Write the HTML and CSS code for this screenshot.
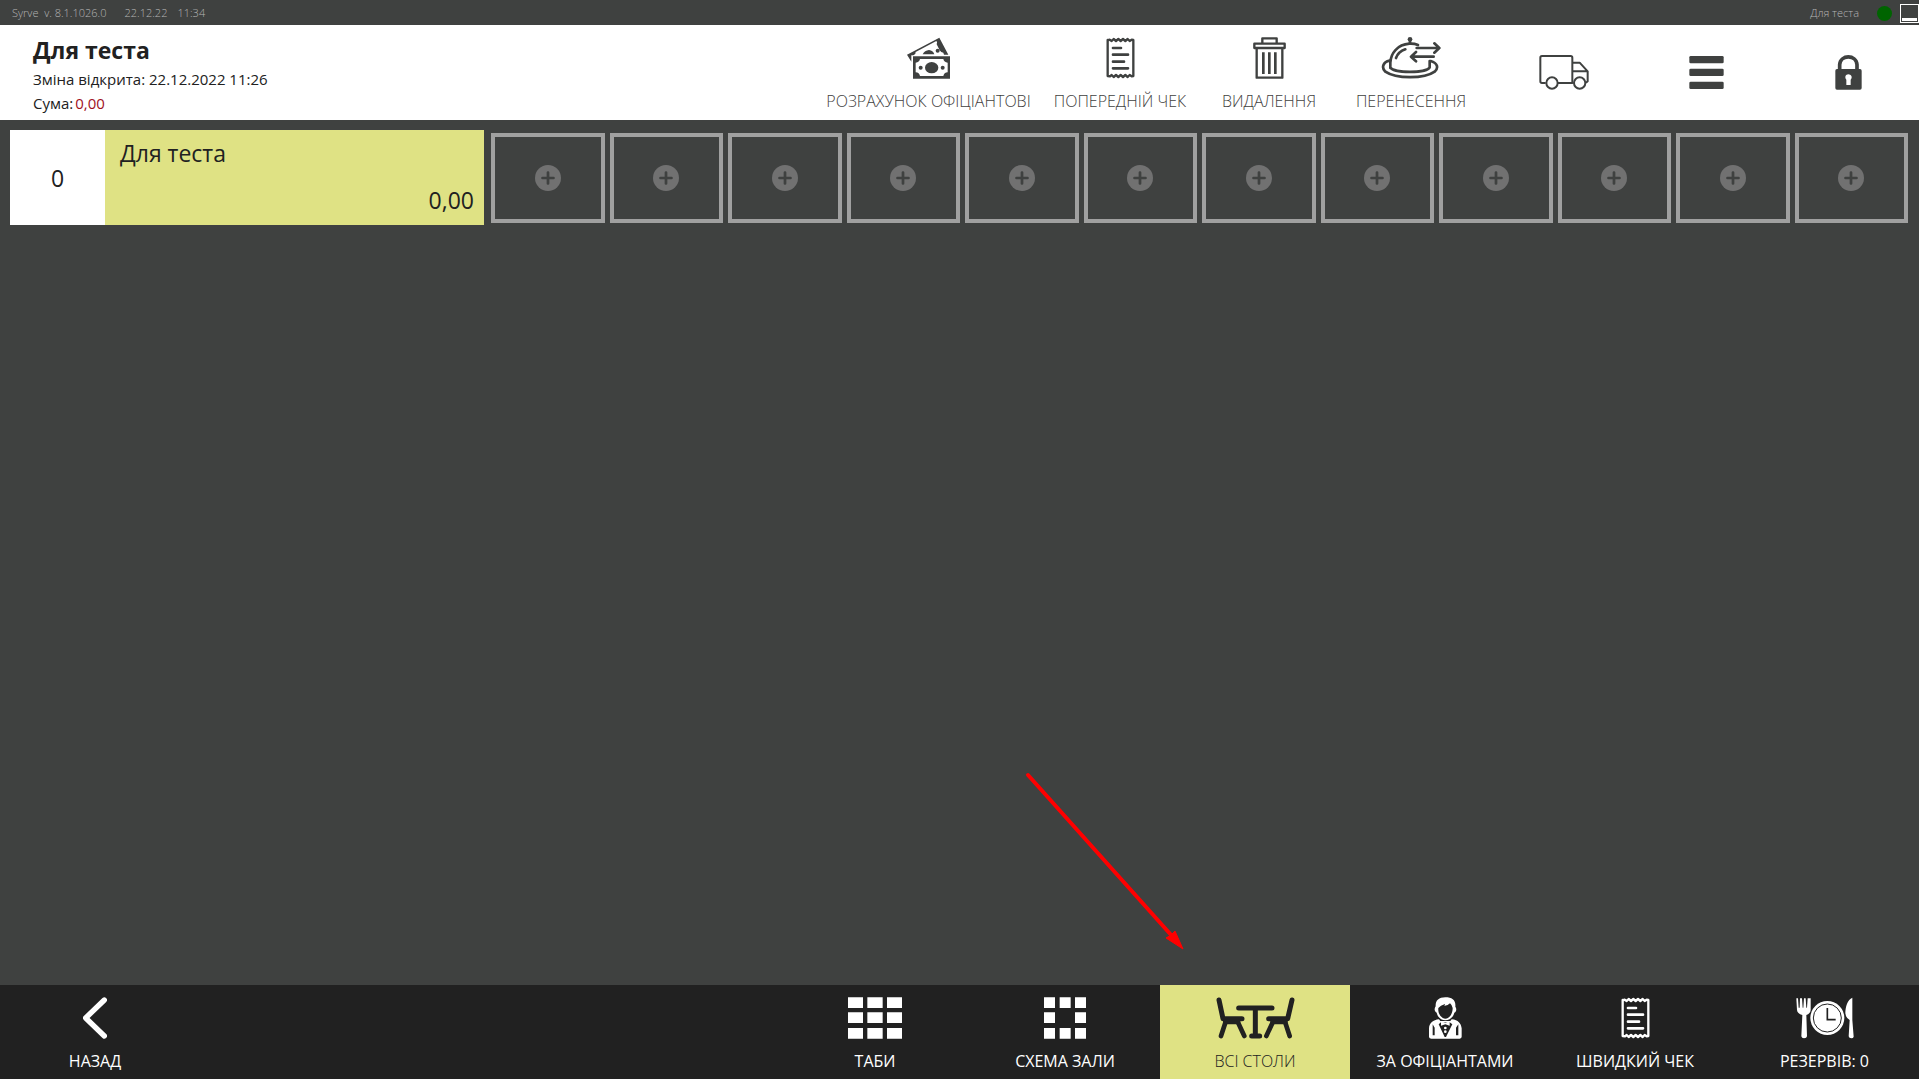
FILE: index.html
```html
<!DOCTYPE html>
<html lang="uk">
<head>
<meta charset="utf-8">
<meta name="viewport" content="width=device-width, initial-scale=1">
<title>Syrve</title>
<link rel="stylesheet" href="styles.css">
</head>
<body>
<svg class="defs" aria-hidden="true">
  <symbol id="receipt" viewBox="915 51 87 126">
    <path d="M920 60V168l7 1 5-4 6 6 7-6 7 6 7-6 7 6 7-6 7 6 6-6 6 4 5-1V60l-5-1-6 4-6-6-7 6-7-6-7 6-7-6-7 6-7-6-6 6-6-4-6 2Z" fill="none" stroke="currentColor" stroke-width="7" stroke-linejoin="round"/>
    <path d="M936 84h24M936 104h45M936 125h33M936 145h45" fill="none" stroke="currentColor" stroke-width="8" stroke-linecap="round"/>
  </symbol>
  <symbol id="plus" viewBox="0 0 76 76">
    <circle cx="38" cy="38" r="38" fill="#717171"/>
    <path d="M38 22v32M22 38h32" stroke="#3f4140" stroke-width="8" stroke-linecap="round"/>
  </symbol>
</svg>

<div class="status">
  <span class="status-version">Syrve&nbsp; v. 8.1.1026.0</span>
  <span class="status-date">22.12.22</span>
  <span>11:34</span>
  <span class="status-user">Для теста</span>
  <span class="status-dot"></span>
  <button class="minimize" aria-label="Згорнути"></button>
</div>

<header class="header">
  <div class="shift">
    <h1>Для теста</h1>
    <p>Зміна відкрита: 22.12.2022 11:26</p>
    <p class="total">Сума:<span>0,00</span></p>
  </div>
  <nav class="actions">
    <button class="tile tile-wide">
      <svg class="icon" width="43" height="42" viewBox="321 51 129 126">
        <path fill="currentColor" fill-rule="evenodd" d="M321 104 418 53 445 104H432L430 98Q423 98 419 91L410 73Q413 66 409 63L347 96Q348 103 340 106H334V125Z"/>
        <path fill="currentColor" d="M368 103Q374 91 387 90 399 91 403 103Z"/>
        <circle cx="413" cy="92" r="6" fill="currentColor"/>
        <path fill="currentColor" fill-rule="evenodd" d="M339 109H450V176H339ZM360 117Q358 127 347 128V157Q358 158 360 168H430Q432 158 443 157V128Q432 127 430 117Z"/>
        <ellipse cx="395" cy="143" rx="20" ry="17" fill="currentColor"/>
        <circle cx="362" cy="143" r="6" fill="currentColor"/><circle cx="428" cy="143" r="6" fill="currentColor"/>
      </svg>
      <span>РОЗРАХУНОК ОФІЦІАНТОВІ</span>
    </button>
    <button class="tile tile-mid">
      <svg class="icon" width="29" height="42"><use href="#receipt"/></svg>
      <span>ПОПЕРЕДНІЙ ЧЕК</span>
    </button>
    <button class="tile">
      <svg class="icon" width="33" height="42" viewBox="157 51 99 126">
        <g fill="none" stroke="currentColor" stroke-width="7" stroke-linejoin="round">
          <path d="M185 70V55H228V70M161 71H252V84H161ZM168 85V173H245V85"/>
          <path d="M188 97V162M206 97V162M224 97V162" stroke-width="8"/>
        </g>
      </svg>
      <span>ВИДАЛЕННЯ</span>
    </button>
    <button class="tile">
      <svg class="icon" width="60" height="42" viewBox="543 51 180 126">
        <g fill="none" stroke="currentColor" stroke-width="8" stroke-linecap="round" stroke-linejoin="round">
          <path d="M571 144V128C572 100 592 74 628 71Q642 70 654 75M571 142C580 160 680 160 689 142V123"/>
          <path d="M569 122C548 126 544 144 556 155 588 177 673 177 704 155 717 143 712 129 692 123"/>
          <path d="M588 114Q595 95 616 88"/>
          <path d="M630 60v11"/>
          <path d="M650 84H714M703 70 718 84 703 98M701 110H634M648 96 633 110 648 124"/>
        </g>
        <circle cx="630" cy="58" r="7" fill="currentColor"/>
      </svg>
      <span>ПЕРЕНЕСЕННЯ</span>
    </button>
    <button class="tile tile-icon tile-first" aria-label="Доставка">
      <svg width="50" height="35" viewBox="1016 105 150 105">
        <g fill="none" stroke="currentColor" stroke-width="6" stroke-linejoin="round">
          <path d="M1036 189H1025Q1020 189 1020 184V113Q1020 108 1025 108H1111Q1116 108 1116 113V189H1073M1116 128H1138L1162 154V184L1157 188M1116 154H1162M1116 188H1120"/>
          <circle cx="1055" cy="189" r="17"/><circle cx="1138" cy="189" r="17"/>
        </g>
      </svg>
    </button>
    <button class="tile tile-icon" aria-label="Меню">
      <svg width="35" height="33" viewBox="266 168 105 99" fill="currentColor">
        <rect x="267" y="168" width="103" height="22" rx="4"/><rect x="267" y="206" width="103" height="22" rx="4"/><rect x="267" y="245" width="103" height="22" rx="4"/>
      </svg>
    </button>
    <button class="tile tile-icon tile-last" aria-label="Заблокувати">
      <svg width="27" height="35" viewBox="706 165 81 105">
        <path d="M720 210V194C722 163 770 163 772 194V210" fill="none" stroke="currentColor" stroke-width="11"/>
        <path fill="currentColor" fill-rule="evenodd" d="M712 207H781Q786 207 786 212V264Q786 269 781 269H712Q707 269 707 264V212Q707 207 712 207ZM740 239V255H753V239C760 232 754 223 746 223 738 223 734 232 740 239Z"/>
      </svg>
    </button>
  </nav>
</header>

<main class="hall">
  <button class="order">
    <span class="order-number">0</span>
    <span class="order-body">
      <span class="order-name">Для теста</span>
      <span class="order-sum">0,00</span>
    </span>
  </button>
  <div class="slots">
    <button class="slot" aria-label="Додати"><svg width="26" height="26"><use href="#plus"/></svg></button>
    <button class="slot" aria-label="Додати"><svg width="26" height="26"><use href="#plus"/></svg></button>
    <button class="slot" aria-label="Додати"><svg width="26" height="26"><use href="#plus"/></svg></button>
    <button class="slot" aria-label="Додати"><svg width="26" height="26"><use href="#plus"/></svg></button>
    <button class="slot" aria-label="Додати"><svg width="26" height="26"><use href="#plus"/></svg></button>
    <button class="slot" aria-label="Додати"><svg width="26" height="26"><use href="#plus"/></svg></button>
    <button class="slot" aria-label="Додати"><svg width="26" height="26"><use href="#plus"/></svg></button>
    <button class="slot" aria-label="Додати"><svg width="26" height="26"><use href="#plus"/></svg></button>
    <button class="slot" aria-label="Додати"><svg width="26" height="26"><use href="#plus"/></svg></button>
    <button class="slot" aria-label="Додати"><svg width="26" height="26"><use href="#plus"/></svg></button>
    <button class="slot" aria-label="Додати"><svg width="26" height="26"><use href="#plus"/></svg></button>
    <button class="slot" aria-label="Додати"><svg width="26" height="26"><use href="#plus"/></svg></button>
  </div>
  <svg class="pointer" width="170" height="187" viewBox="1020 768 170 187" aria-hidden="true">
    <path d="M1028 775 1172 936" stroke="#f00" stroke-width="4" stroke-linecap="round"/>
    <path d="M1183 949 1166 938 1171 935 1175 931Z" fill="#f00" stroke="#f00" stroke-linejoin="round"/>
  </svg>
</main>

<footer class="footer">
  <button class="tile">
    <svg class="icon" width="24" height="42" viewBox="249 81 72 126"><path d="M313 90 257 144 313 198" fill="none" stroke="currentColor" stroke-width="16" stroke-linecap="round" stroke-linejoin="round"/></svg>
    <span>НАЗАД</span>
  </button>
  <nav class="views">
    <button class="tile">
      <svg class="icon" width="54" height="42" viewBox="84 51 162 126" fill="currentColor">
        <path d="M84 52h45v32H84zM142 52h46v32h-46zM201 52h45v32h-45zM84 97h45v32H84zM142 97h46v32h-46zM201 97h45v32h-45zM84 144h45v32H84zM142 144h46v32h-46zM201 144h45v32h-45z"/>
      </svg>
      <span>ТАБИ</span>
    </button>
    <button class="tile">
      <svg class="icon" width="42" height="42" viewBox="672 51 126 126" fill="currentColor">
        <path d="M672 52h33v32h-33zM719 52h33v32h-33zM765 52h33v32h-33zM672 97h33v32h-33zM765 97h33v32h-33zM672 144h33v32h-33zM719 144h33v32h-33zM765 144h33v32h-33z"/>
      </svg>
      <span>СХЕМА ЗАЛИ</span>
    </button>
    <button class="tile tile-active" aria-current="page">
      <svg class="icon" width="79" height="42" viewBox="197 51 237 126">
        <g fill="none" stroke="currentColor" stroke-width="15" stroke-linecap="round" stroke-linejoin="round">
          <path d="M206 60 218 116H275M425 60 412 116H355M265 84H365M315 84V168M304 168H328" />
          <path d="M226 125 212 168M262 125 282 168M404 125 418 168M368 125 348 168" stroke-width="14"/>
          <path d="M226 125H262M368 125H404" stroke-width="16"/>
        </g>
      </svg>
      <span>ВСІ СТОЛИ</span>
    </button>
    <button class="tile">
      <svg class="icon" width="33" height="42" viewBox="836 51 99 126">
        <path fill="currentColor" fill-rule="evenodd" d="M856 79C855 62 865 52 885 52 906 52 917 61 915 80 920 86 918 96 912 98 909 112 897 121 885 121 873 121 862 112 859 98 852 95 851 85 856 79ZM864 84C862 102 874 116 885 116 897 116 907 102 907 84Q906 76 899 70 892 78 881 78 884 76 884 72 870 76 864 84Z"/>
        <path fill="currentColor" fill-rule="evenodd" d="M866 118C848 120 837 129 836 145V171Q837 176 843 176H928Q934 175 934 170V145C932 130 924 120 904 118L900 123H870ZM872 127 898 127 906 133 887 171H883L865 133ZM847 133V166H853V143ZM924 133V166H917V143Z"/>
        <path fill="currentColor" d="M872 124 885 128 898 124V137L885 133 872 137Z"/>
        <circle cx="885" cy="144" r="4" fill="currentColor"/><circle cx="885" cy="155" r="4" fill="currentColor"/>
      </svg>
      <span>ЗА ОФІЦІАНТАМИ</span>
    </button>
    <button class="tile">
      <svg class="icon" width="29" height="42"><use href="#receipt"/></svg>
      <span>ШВИДКИЙ ЧЕК</span>
    </button>
    <button class="tile tile-last">
      <svg class="icon" width="58" height="42" viewBox="768 51 174 126">
        <g fill="currentColor">
          <path d="M769 55H774L776 83H779L780 55H786L788 83H790L792 55H797L799 83H801L803 55H812V90Q811 101 799 105L801 169Q800 175 792 175 785 175 784 169L787 105Q772 101 771 90Z"/>
          <circle cx="862" cy="114" r="51"/>
          <path d="M937 53V120L941 170Q940 175 934 175 927 175 926 169L929 120Q918 115 916 100C916 80 923 59 937 53Z"/>
        </g>
        <circle cx="862" cy="114" r="42" fill="none" stroke="#212121" stroke-width="3"/>
        <path d="M862 84V119H887" fill="none" stroke="#212121" stroke-width="5"/>
      </svg>
      <span>РЕЗЕРВІВ: 0</span>
    </button>
  </nav>
</footer>
</body>
</html>
```
FILE: styles.css
```css
* {
  box-sizing: border-box;
}

body {
  display: flex;
  flex-direction: column;
  min-height: 100vh;
  margin: 0;
  background: #3f4140;
  color: #212121;
  font-family: "Open Sans", "Noto Sans", sans-serif;
  font-size: 16px;
  line-height: 24px;
}

button {
  margin: 0;
  padding: 0;
  border: 0;
  background: none;
  color: inherit;
  font: inherit;
}

h1,
p {
  margin: 0;
}

svg {
  display: block;
}

.defs {
  position: absolute;
  width: 0;
  height: 0;
}

/* Status line */
.status {
  display: flex;
  align-items: center;
  height: 25px;
  padding: 1px 0 0 12px;
  color: #b4b4b4;
  font-size: 11px;
  font-weight: 300;
}

.status-version {
  margin-right: 18px;
}

.status-date {
  margin-right: 10px;
}

.status-user {
  margin-left: auto;
}

.status-dot {
  width: 15px;
  height: 15px;
  margin: 0 8px 0 18px;
  border-radius: 50%;
  background: #006400;
}

.minimize {
  display: flex;
  align-items: flex-end;
  width: 19px;
  height: 19px;
  padding: 1px;
  border: 1px solid #fff;
}

.minimize::after {
  content: "";
  width: 15px;
  height: 3px;
  background: #fff;
}

/* Header */
.header {
  display: flex;
  justify-content: space-between;
  min-height: 95px;
  background: #fff;
}

.shift {
  padding: 8px 0 0 33px;
  font-size: 15px;
}

.shift h1 {
  font-size: 23px;
  font-weight: 700;
  line-height: 34px;
}

.total span {
  margin-left: 2px;
  color: #a0101c;
}

.actions {
  display: flex;
  color: #3f4140;
  font-weight: 300;
}

.tile {
  display: flex;
  flex-direction: column;
  align-items: center;
  gap: 10px;
  width: 142px;
  padding-top: 12px;
  white-space: nowrap;
}

.tile-wide {
  width: 227px;
}

.tile-mid {
  width: 156px;
}

.tile-icon {
  justify-content: center;
  width: 143px;
  padding: 0;
}

.tile-icon.tile-last {
  width: 141px;
}

.tile-first {
  margin-left: 10px;
}

/* Tables */
.hall {
  position: relative;
  display: flex;
  flex: 1;
  align-items: flex-start;
  gap: 7px;
  padding: 10px 11px 10px 10px;
}

.order {
  display: flex;
  flex: none;
  width: 474px;
  height: 95px;
  background: #dfe284;
  font-size: 23px;
  line-height: 32px;
}

.order-number {
  display: flex;
  align-items: center;
  justify-content: center;
  align-self: stretch;
  width: 95px;
  background: #fff;
}

.order-body {
  display: flex;
  flex: 1;
  flex-direction: column;
  align-self: stretch;
  justify-content: space-between;
  padding: 7px 10px 9px 15px;
  text-align: left;
}

.order-sum {
  text-align: right;
}

.slots {
  display: grid;
  flex: 1;
  grid-template-columns: repeat(12, 1fr);
  gap: 5px;
  padding-top: 3px;
}

.slot {
  display: flex;
  align-items: center;
  justify-content: center;
  height: 90px;
  border: 4px solid #a0a0a0;
}

.pointer {
  position: absolute;
  right: 729px;
  bottom: 30px;
}

/* Bottom navigation */
.footer {
  display: flex;
  justify-content: space-between;
  min-height: 94px;
  background: #212121;
  color: #fff;
}

.views {
  display: flex;
}

.footer .tile {
  width: 190px;
}

.footer .tile-last {
  width: 189px;
}

.footer .tile-active {
  background: #dfe284;
  color: #212121;
  font-weight: 300;
}
```
